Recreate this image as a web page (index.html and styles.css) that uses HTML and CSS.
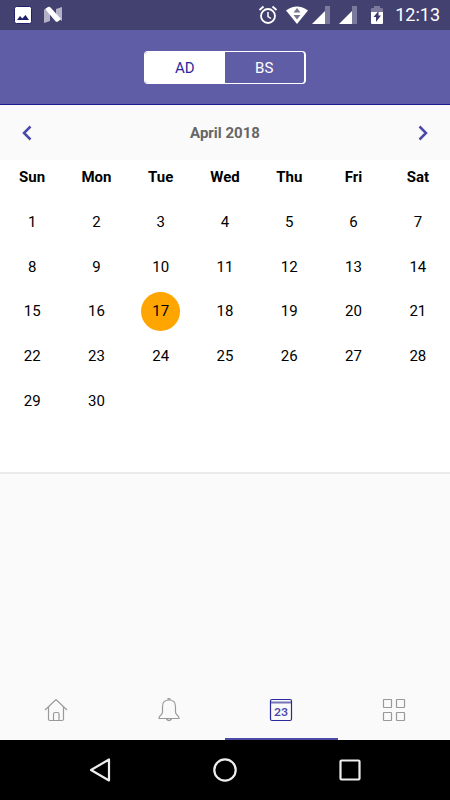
FILE: index.html
```html
<!DOCTYPE html>
<html lang="en">
  <head>
    <meta charset="UTF-8" />
    <meta name="viewport" content="width=device-width, initial-scale=1.0" />
    <title>Calendar</title>
    <link rel="stylesheet" href="styles.css">
  </head>
  <body>
    <div class="status-bar">
      <div class="status-left">
        <svg width="18" height="18" viewBox="0 0 18 18">
          <rect x="0.5" y="0.5" width="17" height="17" rx="2" fill="#fff" stroke="#23206a" />
          <path d="M3 14l3-4 2.300 2.500L11.500 9l3.500 5z" fill="#23206a" />
        </svg>
        <svg width="20" height="18" viewBox="0 0 20 18">
          <path d="M1 3l6 4v8l-6 2zM19 1v14l-6-4V3z" fill="#b3b2c9" />
          <path d="M2 3l3-2q1.500-.5 2.500.5L18 13l-3 2.500q-1.500.8-2.500-.3z" fill="#fff" />
        </svg>
      </div>
      <div class="status-right">
        <svg class="alarm" width="20" height="20" viewBox="0 0 20 20" fill="none" stroke="#fff">
          <circle cx="10" cy="11" r="7" stroke-width="1.800" />
          <path d="M10 7v4.500l3 2" stroke-width="1.500" />
          <path d="M1.500 5l4-3.500M18.500 5l-4-3.500" stroke-width="1.800" />
        </svg>
        <svg class="wifi" width="22" height="18" viewBox="0 0 22 18">
          <path d="M0 4.500Q11-3.500 22 4.500L11 18z" fill="#fff" />
          <path d="M11 2l3.500 4.500h-7zM11 13.500L7.500 9h7z" fill="#77768f" />
        </svg>
        <svg class="signal" width="18" height="18" viewBox="0 0 18 18">
          <path d="M13 5V0h5v18h-5z" fill="#7b799c" />
          <path d="M0 18L13 5v13z" fill="#fff" />
        </svg>
        <svg class="signal-two" width="18" height="18" viewBox="0 0 18 18">
          <path d="M13 5V0h5v18h-5z" fill="#7b799c" />
          <path d="M0 18L13 5v13z" fill="#fff" />
        </svg>
        <svg class="battery" width="12" height="18" viewBox="0 0 12 18">
          <path d="M0 6V3q0-1 1-1h2V0h6v2h2q1 0 1 1v3z" fill="#7b799c" />
          <path d="M0 6h12v11q0 1-1 1H1q-1 0-1-1z" fill="#fff" />
          <path d="M7.500 5v4.500H10L5 16v-5H2.500z" fill="#3b3970" />
        </svg>
        <span class="time">12:13</span>
      </div>
    </div>

    <header>
      <div class="switch">
        <button class="switch-btn active">AD</button>
        <button class="switch-btn">BS</button>
      </div>
    </header>

    <main>
      <div class="month-bar">
        <button class="arrow" aria-label="Previous month">
          <svg width="10" height="16" viewBox="0 0 10 16"><path d="M8.500 1.500L2 8l6.500 6.500" /></svg>
        </button>
        <h2>April 2018</h2>
        <button class="arrow" aria-label="Next month">
          <svg width="10" height="16" viewBox="0 0 10 16"><path d="M1.500 1.500L8 8l-6.500 6.500" /></svg>
        </button>
      </div>
      <div class="calendar">
        <table>
          <thead>
            <tr>
              <th>Sun</th>
              <th>Mon</th>
              <th>Tue</th>
              <th>Wed</th>
              <th>Thu</th>
              <th>Fri</th>
              <th>Sat</th>
            </tr>
          </thead>
          <tbody>
            <tr>
              <td><button class="day">1</button></td>
              <td><button class="day">2</button></td>
              <td><button class="day">3</button></td>
              <td><button class="day">4</button></td>
              <td><button class="day">5</button></td>
              <td><button class="day">6</button></td>
              <td><button class="day">7</button></td>
            </tr>
            <tr>
              <td><button class="day">8</button></td>
              <td><button class="day">9</button></td>
              <td><button class="day">10</button></td>
              <td><button class="day">11</button></td>
              <td><button class="day">12</button></td>
              <td><button class="day">13</button></td>
              <td><button class="day">14</button></td>
            </tr>
            <tr>
              <td><button class="day">15</button></td>
              <td><button class="day">16</button></td>
              <td><button class="day today">17</button></td>
              <td><button class="day">18</button></td>
              <td><button class="day">19</button></td>
              <td><button class="day">20</button></td>
              <td><button class="day">21</button></td>
            </tr>
            <tr>
              <td><button class="day">22</button></td>
              <td><button class="day">23</button></td>
              <td><button class="day">24</button></td>
              <td><button class="day">25</button></td>
              <td><button class="day">26</button></td>
              <td><button class="day">27</button></td>
              <td><button class="day">28</button></td>
            </tr>
            <tr>
              <td><button class="day">29</button></td>
              <td><button class="day">30</button></td>
              <td></td>
              <td></td>
              <td></td>
              <td></td>
              <td></td>
            </tr>
          </tbody>
        </table>
      </div>
    </main>

    <nav class="tabs">
      <a href="#home" class="tab" aria-label="Home">
        <svg width="24" height="24" viewBox="0 0 24 24">
          <path d="M1 12L12 1.500 23 12M4.500 9v12q0 1.500 1.500 1.500h12q1.500 0 1.500-1.500V9M9.500 22.500V16q0-1.500 1.500-1.500h2.500q1.500 0 1.500 1.500v6.500" />
        </svg>
      </a>
      <a href="#alerts" class="tab" aria-label="Notifications">
        <svg width="24" height="24" viewBox="0 0 24 24">
          <path d="M5.500 14V8.500Q5.500 2 12 2t6.500 6.500V14q0 2 2 3.500 1.500 1 1.500 3H2q0-2 1.500-3 2-1.500 2-3.500z" />
          <path d="M10.500 1.500q1.500-1.500 3 0M9.500 21q2.500 3 5 0" stroke-width="1.500" />
        </svg>
      </a>
      <a href="#calendar" class="tab selected" aria-label="Calendar">
        <svg width="24" height="24" viewBox="0 0 24 24">
          <rect x="1.500" y="1.500" width="21" height="21" rx="1.500" />
          <path d="M2 4.500h20" class="binding" />
          <text x="12" y="18">23</text>
        </svg>
      </a>
      <a href="#more" class="tab" aria-label="More">
        <svg width="24" height="24" viewBox="0 0 24 24">
          <rect x="1.500" y="1.500" width="8" height="8" rx="0.500" />
          <rect x="14.500" y="1.500" width="8" height="8" rx="0.500" />
          <rect x="1.500" y="14.500" width="8" height="8" rx="0.500" />
          <rect x="14.500" y="14.500" width="8" height="8" rx="0.500" />
        </svg>
      </a>
    </nav>

    <div class="system-nav">
      <button aria-label="Back">
        <svg width="24" height="26" viewBox="0 0 24 26"><path d="M3 13L21 2.500v21z" /></svg>
      </button>
      <button aria-label="Home">
        <svg width="26" height="26" viewBox="0 0 26 26"><circle cx="13" cy="13" r="10.700" /></svg>
      </button>
      <button aria-label="Recent apps">
        <svg width="24" height="24" viewBox="0 0 24 24"><rect x="2.500" y="2.500" width="19" height="19" rx="1" /></svg>
      </button>
    </div>
  </body>
</html>
```

FILE: styles.css
```css
* {
  box-sizing: border-box;
}
body {
  font-family: Roboto, sans-serif;
  background-color: #fafafa;
  margin: 0;
  min-height: 100vh;
  display: flex;
  flex-direction: column;
}
button {
  font-family: inherit;
  background: none;
  border: none;
  padding: 0;
  cursor: pointer;
}
svg {
  display: block;
}

.status-bar {
  height: 30px;
  background-color: #434170;
  color: white;
  display: flex;
  justify-content: space-between;
  align-items: center;
  padding: 0 10px 0 14px;
}
.status-left,
.status-right {
  display: flex;
  align-items: center;
}
.status-left {
  gap: 11px;
}
.wifi {
  margin-left: 8px;
}
.signal {
  margin-left: 4px;
}
.signal-two {
  margin-left: 9px;
}
.battery {
  margin-left: 14px;
}
.time {
  font-size: 18px;
  line-height: 30px;
  margin-left: 12px;
}

header {
  height: 75px;
  background-color: #5f5da5;
  border-bottom: 1px solid #1c1a8c;
  display: flex;
  justify-content: center;
  align-items: center;
}
.switch {
  display: flex;
  width: 36%;
  height: 33px;
  border: 1px solid white;
  border-right-width: 2px;
  border-radius: 4px;
  overflow: hidden;
}
.switch-btn {
  flex: 1;
  padding-top: 2px;
  font-size: 15px;
  color: white;
}
.switch-btn.active {
  background-color: white;
  color: #2b289c;
}

main {
  flex: 1;
}
.month-bar {
  height: 55px;
  display: flex;
  justify-content: space-between;
  align-items: center;
  padding: 0 12px;
}
.month-bar h2 {
  margin: 0;
  font-size: 15px;
  font-weight: bold;
  color: #666;
}
.arrow {
  width: 30px;
  height: 40px;
  display: flex;
  align-items: center;
  justify-content: center;
}
.arrow path {
  fill: none;
  stroke: #4a48a8;
  stroke-width: 2.5;
}

.calendar {
  background-color: white;
  border-bottom: 2px solid #ebebeb;
  padding-bottom: 49px;
}
table {
  width: 100%;
  height: 263px;
  table-layout: fixed;
  border-collapse: collapse;
}
th {
  height: 40px;
  padding: 0 0 6px;
  font-size: 15px;
  font-weight: bold;
}
td {
  padding: 0;
  text-align: center;
}
.day {
  display: block;
  width: 39px;
  height: 39px;
  margin: 0 auto;
  border-radius: 50%;
  font-size: 15px;
  color: black;
}
.today {
  background-color: #ffa500;
}

.tabs {
  display: flex;
  height: 60px;
}
.tab {
  flex: 1;
  display: flex;
  align-items: center;
  justify-content: center;
  border-top: 2px solid transparent;
  border-bottom: 2px solid transparent;
}
.tab svg {
  fill: none;
  stroke: #999;
  stroke-width: 1.2;
}
.tab.selected {
  border-bottom-color: #4d4aa8;
}
.tab.selected svg {
  stroke: #2b289c;
}
.tab .binding {
  stroke: #7775ba;
  stroke-width: 2;
}
.tab text {
  font-family: Lato, sans-serif;
  font-size: 12px;
  font-weight: bold;
  text-anchor: middle;
  fill: #4a48a8;
  stroke: none;
}

.system-nav {
  height: 60px;
  background-color: black;
  display: flex;
  justify-content: center;
  align-items: center;
  gap: 100px;
}
.system-nav svg {
  fill: none;
  stroke: #eee;
  stroke-width: 2.2;
  stroke-linejoin: round;
}
```
